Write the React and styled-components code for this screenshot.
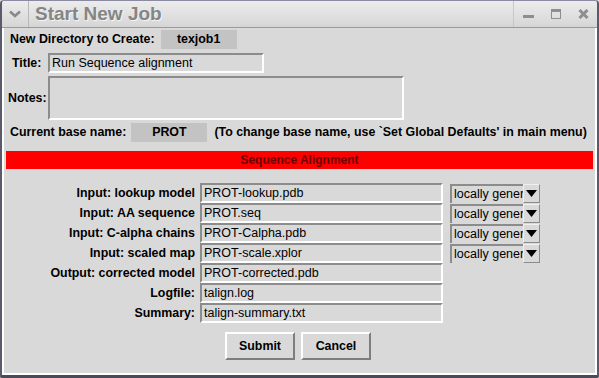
import React from 'react';
import styled, { createGlobalStyle } from 'styled-components';

const Global = createGlobalStyle`
  html, body {
    margin: 0;
    padding: 0;
    background: #d9d9d9;
  }
  body {
    font-family: "Liberation Sans", Arial, sans-serif;
  }
`;

const Window = styled.div`
  width: 599px;
  height: 378px;
  box-sizing: border-box;
  display: flex;
  flex-direction: column;
  background: #d9d9d9;
  border-left: 2px solid #5a5a6a;
  border-right: 2px solid #5a5a6a;
  border-bottom: 3px solid #4a4a5a;
  border-top: 1px solid #8a8aa0;
  border-radius: 4px 4px 2px 2px;
  overflow: hidden;
`;

const TitleBar = styled.div`
  height: 26px;
  display: flex;
  align-items: stretch;
  background: linear-gradient(#ececec, #d6d6d6);
  border-bottom: 1px solid #9a9a9a;
`;

const MenuBtn = styled.div`
  width: 26px;
  display: flex;
  align-items: center;
  justify-content: center;
  border-right: 1px solid #b8b8b8;
`;

const Caption = styled.div`
  flex: 1;
  display: flex;
  align-items: center;
  padding-left: 6px;
  font-size: 19px;
  font-weight: bold;
  color: #858585;
  text-shadow: 1px 1px 0 #f4f4f4;
`;

const Controls = styled.div`
  display: flex;
  align-items: center;
  gap: 17px;
  padding: 0 8px 0 9px;
  border-left: 1px solid #c8c8c8;
`;

const Body = styled.div`
  flex: 1;
  display: flex;
  flex-direction: column;
  border-left: 2px solid #fff;
  border-right: 2px solid #fff;
  border-bottom: 2px solid #fff;
  padding: 1px 0 0;
`;

const Row = styled.div`
  display: flex;
  align-items: center;
  height: ${p => p.h || 20}px;
  margin-top: ${p => p.mt || 0}px;
  padding-left: ${p => p.pl || 0}px;
`;

const Label = styled.span`
  font-size: 12.4px;
  font-weight: bold;
  color: #000;
  white-space: nowrap;
  width: ${p => (p.w ? `${p.w}px` : 'auto')};
`;

const ValueBox = styled.div`
  width: ${p => p.w}px;
  height: 19px;
  margin-left: ${p => p.ml}px;
  background: #c3c3c3;
  display: flex;
  align-items: center;
  justify-content: center;
  font-size: 12.4px;
  font-weight: bold;
`;

const Entry = styled.div`
  box-sizing: border-box;
  width: ${p => p.w}px;
  height: ${p => p.h || 20}px;
  margin-left: ${p => p.ml || 0}px;
  border: 2px solid;
  border-color: #8c8c8c #fff #fff #8c8c8c;
  background: #d9d9d9;
  font-size: 12.5px;
  line-height: 16px;
  padding-left: 2px;
  white-space: nowrap;
  overflow: hidden;
`;

const Hint = styled.span`
  font-size: 12.4px;
  font-weight: bold;
  margin-left: 7px;
  white-space: nowrap;
`;

const SectionBar = styled.div`
  margin: 9px 2px 0 2px;
  height: 18px;
  background: #ff0000;
  color: #6a0000;
  font-size: 12px;
  font-weight: bold;
  display: flex;
  align-items: center;
  justify-content: center;
`;

const FileGrid = styled.div`
  margin-top: 14px;
  display: grid;
  grid-template-columns: 191px 243px 92px;
  grid-auto-rows: 20px;
  column-gap: 5px;
`;

const FieldLabel = styled.span`
  font-size: 12.4px;
  font-weight: bold;
  text-align: right;
  align-self: center;
  white-space: nowrap;
`;

const Option = styled.div`
  display: flex;
  height: 19px;
  margin-left: 2px;
  align-self: center;
`;

const OptionText = styled.div`
  box-sizing: border-box;
  width: 75px;
  border-left: 2px solid #8c8c8c;
  border-top: 2px solid #8c8c8c;
  font-size: 12.5px;
  line-height: 16px;
  padding-left: 2px;
  overflow: hidden;
  white-space: nowrap;
`;

const OptionArrow = styled.div`
  box-sizing: border-box;
  width: 17px;
  border: 1px solid;
  border-color: #f0f0f0 #8c8c8c #8c8c8c #f0f0f0;
  display: flex;
  align-items: center;
  justify-content: center;
`;

const Buttons = styled.div`
  display: flex;
  justify-content: center;
  gap: 6px;
  margin-top: 9px;
  padding-right: 3px;
`;

const Button = styled.button`
  box-sizing: border-box;
  width: 70px;
  height: 28px;
  border: 2px solid;
  border-color: #fff #7e7e7e #7e7e7e #fff;
  background: #d9d9d9;
  font-family: "Liberation Sans", Arial, sans-serif;
  font-size: 12.4px;
  font-weight: bold;
  color: #000;
  padding: 0;
`;

const files = [
  ['Input: lookup model', 'PROT-lookup.pdb', true],
  ['Input: AA sequence', 'PROT.seq', true],
  ['Input: C-alpha chains', 'PROT-Calpha.pdb', true],
  ['Input: scaled map', 'PROT-scale.xplor', true],
  ['Output: corrected model', 'PROT-corrected.pdb', false],
  ['Logfile:', 'talign.log', false],
  ['Summary:', 'talign-summary.txt', false],
];

const Arrow = () => (
  <svg width="11" height="7" viewBox="0 0 11 7">
    <path d="M0 0h11L5.5 7z" fill="#000" />
  </svg>
);

export default function App() {
  return (
    <Window>
      <Global />
      <TitleBar>
        <MenuBtn>
          <svg width="12" height="8" viewBox="0 0 12 8">
            <path d="M1 1.5l5 4.5 5-4.5" stroke="#8a8a8a" strokeWidth="2.6" fill="none" />
          </svg>
        </MenuBtn>
        <Caption>Start New Job</Caption>
        <Controls>
          <svg width="11" height="11" viewBox="0 0 11 11">
            <rect x="0" y="6" width="11" height="3" fill="#8e8e8e" />
          </svg>
          <svg width="10" height="10" viewBox="0 0 10 10">
            <rect x="0.5" y="0.5" width="9" height="9" fill="none" stroke="#8e8e8e" />
            <rect x="0" y="0" width="10" height="3" fill="#8e8e8e" />
          </svg>
          <svg width="11" height="10" viewBox="0 0 11 10">
            <path d="M1.5 1l8 8M9.5 1l-8 8" stroke="#8e8e8e" strokeWidth="3" />
          </svg>
        </Controls>
      </TitleBar>
      <Body>
        <Row pl={6} mt={0} h={20}>
          <Label>New Directory to Create:</Label>
          <ValueBox w={76} ml={6}>texjob1</ValueBox>
        </Row>
        <Row pl={8} mt={4} h={20}>
          <Label w={36}>Title:</Label>
          <Entry w={216}>Run Sequence alignment</Entry>
        </Row>
        <Row pl={4} mt={3} h={44}>
          <Label w={40}>Notes:</Label>
          <Entry w={356} h={44} />
        </Row>
        <Row pl={6} mt={2} h={20}>
          <Label>Current base name:</Label>
          <ValueBox w={76} ml={5}>PROT</ValueBox>
          <Hint>(To change base name, use `Set Global Defaults' in main menu)</Hint>
        </Row>
        <SectionBar>Sequence Alignment</SectionBar>
        <FileGrid>
          {files.map(([label, value, opt]) => (
            <React.Fragment key={label}>
              <FieldLabel>{label}</FieldLabel>
              <Entry w={243}>{value}</Entry>
              {opt ? (
                <Option>
                  <OptionText>locally generated</OptionText>
                  <OptionArrow>
                    <Arrow />
                  </OptionArrow>
                </Option>
              ) : (
                <span />
              )}
            </React.Fragment>
          ))}
        </FileGrid>
        <Buttons>
          <Button>Submit</Button>
          <Button>Cancel</Button>
        </Buttons>
      </Body>
    </Window>
  );
}
